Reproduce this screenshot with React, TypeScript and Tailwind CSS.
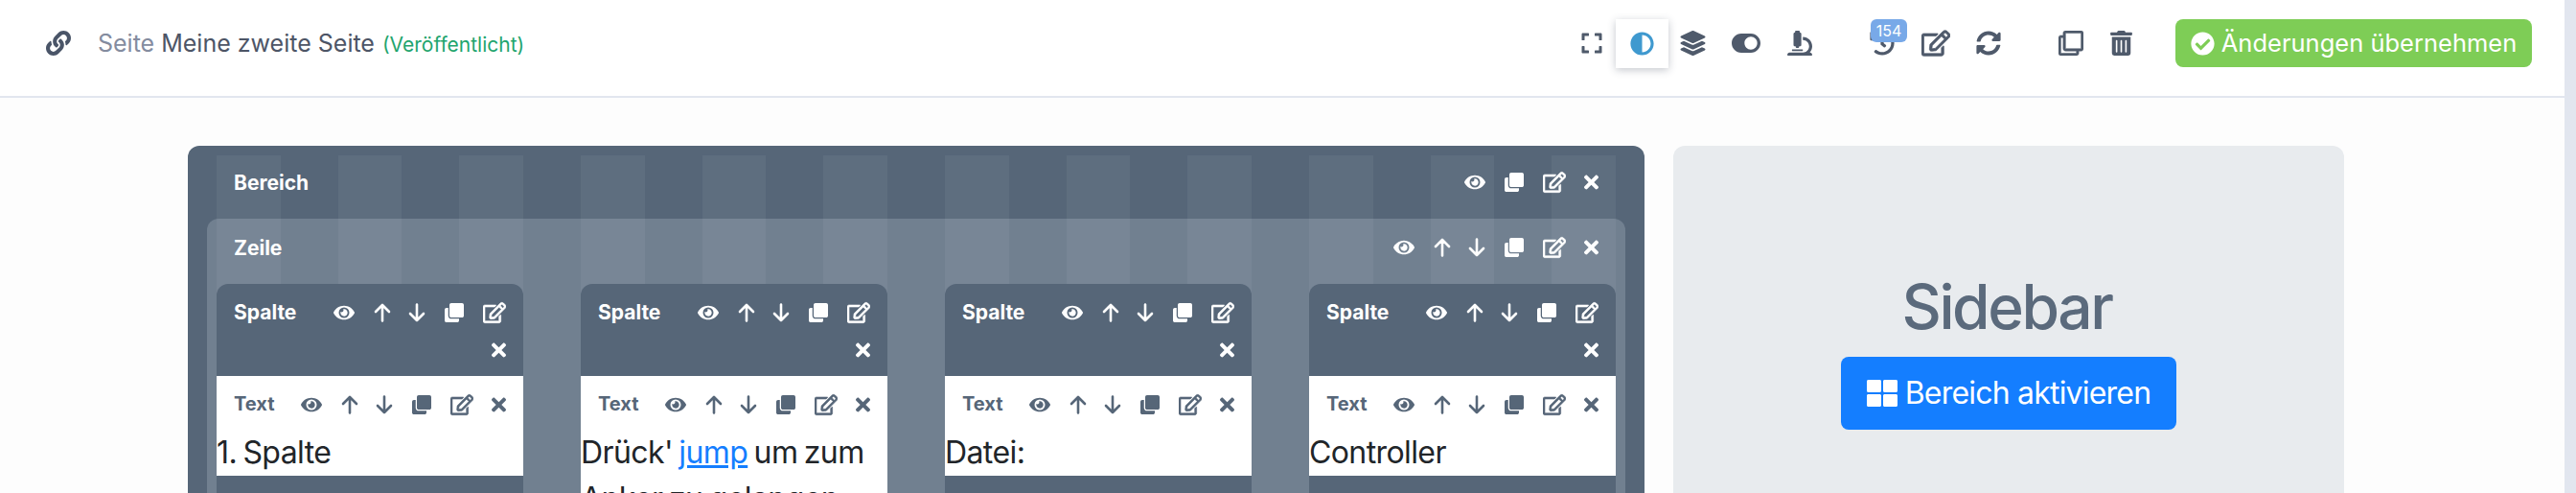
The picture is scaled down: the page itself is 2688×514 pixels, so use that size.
import {
  FaAdjust,
  FaCheckCircle,
  FaClone,
  FaEye,
  FaExpand,
  FaHistory,
  FaLayerGroup,
  FaLink,
  FaMicroscope,
  FaRegClone,
  FaRegEdit,
  FaSyncAlt,
  FaThLarge,
  FaTimes,
  FaToggleOn,
  FaTrashAlt,
} from "react-icons/fa";

function ArrowUp() {
  return (
    <svg viewBox="0 0 18 20" className="h-5 w-[18px] ml-5" fill="none" stroke="currentColor" strokeWidth="2.6" strokeLinecap="round" strokeLinejoin="round">
      <path d="M9 18.5V2M2 9l7-7 7 7" />
    </svg>
  );
}

function ArrowDown() {
  return (
    <svg viewBox="0 0 18 20" className="h-5 w-[18px] ml-[18px]" fill="none" stroke="currentColor" strokeWidth="2.6" strokeLinecap="round" strokeLinejoin="round">
      <path d="M9 1.5V18M2 11l7 7 7-7" />
    </svg>
  );
}

// Controls of one block head. `move` adds the up and down arrows.
function BlockTools({ move }: { move?: boolean }) {
  return (
    <>
      <FaEye className="h-[22px] w-[22px] ml-[19px]" />
      {move && <ArrowUp />}
      {move && <ArrowDown />}
      <FaClone className="h-5 w-5 ml-5" />
      <FaRegEdit className="h-6 w-6 ml-5 stroke-[14]" />
      <FaTimes className="h-[22px] w-[15px] ml-[19px]" />
    </>
  );
}

function Column({ children }: { children: React.ReactNode }) {
  return (
    <div className="relative z-10 w-[320px] bg-[#566678] rounded-t-xl overflow-hidden">
      <div className="h-24 pt-2.5 px-[18px] flex flex-wrap justify-end content-start items-center gap-y-[9px] text-white">
        <span className="text-[21px] leading-[39px] font-bold mr-auto">Spalte</span>
        <BlockTools move />
      </div>
      <div className="bg-white">
        <div className="h-14 pt-2.5 px-[18px] flex items-start text-[#566678]">
          <span className="text-[20px] leading-[39px] font-bold mr-auto">Text</span>
          <div className="h-[39px] flex items-center">
            <BlockTools move />
          </div>
        </div>
        <p className="text-[32px] leading-[48px] tracking-[-0.6px] [word-spacing:-2px] text-[#212529]">{children}</p>
      </div>
      <div className="h-6" />
    </div>
  );
}

export default function App() {
  const stripes = Array.from({ length: 12 }, (_, i) => i);

  return (
    <div className="h-[514px] overflow-hidden flex bg-[#fdfdfd] font-['Inter','Liberation_Sans',sans-serif]">
      <div className="flex-1 min-w-0">
        <header className="h-[102px] bg-white border-b-2 border-[#e2e6ef] flex items-center pl-12 pr-[34px] pb-2.5 text-[#4d5566]">
          <FaLink className="h-[26px] w-[26px] text-[#4a5568]" />
          <h1 className="ml-7 mt-0.5 text-[25px] flex items-baseline">
            <span className="text-[#848c9f]">Seite</span>
            <span className="ml-[7px]">Meine zweite Seite</span>
            <span className="ml-2 text-[21px] text-[#1fa56e]">(Veröffentlicht)</span>
          </h1>
          <div className="ml-auto flex items-center text-[#4f5a6b]">
            <FaExpand className="h-6 w-6" />
            <div className="ml-[13px] h-[51px] w-[55px] flex items-center justify-center shadow-[0_2px_8px_rgba(60,70,90,0.3)]">
              <FaAdjust className="h-[25px] w-[25px] text-[#3f99cf]" />
            </div>
            <FaLayerGroup className="ml-3 h-[26px] w-[27px]" />
            <FaToggleOn className="ml-[27px] h-[30px] w-[30px]" />
            <FaMicroscope className="ml-[28px] h-[26px] w-[26px]" />
            <div className="relative ml-[60px] h-[26px] w-[26px]">
              <FaHistory className="h-[26px] w-[26px]" />
              <span className="absolute -top-3 left-px h-6 w-[38px] rounded-md bg-[#78a9e8] text-white text-[16px] leading-6 text-center">154</span>
            </div>
            <FaRegEdit className="ml-[28px] h-[30px] w-[30px] stroke-[14]" />
            <FaSyncAlt className="ml-[27px] h-[26px] w-[26px]" />
            <FaRegClone className="ml-[60px] h-[26px] w-[26px] stroke-[10]" />
            <FaTrashAlt className="ml-[28px] h-[26px] w-[23px]" />
            <button className="ml-[45px] h-[50px] w-[372px] rounded-lg bg-[#7ecd56] text-white text-[25.5px] flex items-center justify-center gap-[7px]">
              <FaCheckCircle className="h-[25px] w-[25px]" />
              Änderungen übernehmen
            </button>
          </div>
        </header>

        <main className="pt-[50px] pl-[196px] flex gap-[30px]">
          <section className="relative w-[1520px] h-[420px] bg-[#566678] rounded-xl px-5">
            <div className="absolute inset-x-[30px] top-2.5 bottom-0 grid grid-cols-12 gap-x-[60px] pointer-events-none z-[5]">
              {stripes.map((i) => (
                <div key={i} className="bg-white/5" />
              ))}
            </div>
            <div className="h-[76px] pt-[18px] px-7 flex items-start text-white">
              <span className="text-[21px] leading-[41px] font-bold mr-auto">Bereich</span>
              <div className="h-[39px] flex items-center">
                <BlockTools />
              </div>
            </div>
            <div className="h-[344px] bg-[#718090] rounded-t-xl">
              <div className="h-[68px] pt-2.5 px-7 flex items-start text-white">
                <span className="text-[21px] leading-[41px] font-bold mr-auto">Zeile</span>
                <div className="h-[39px] flex items-center">
                  <BlockTools move />
                </div>
              </div>
              <div className="px-2.5 flex justify-between">
                <Column>1. Spalte</Column>
                <Column>
                  Drück' <a className="text-[#147eff] underline">jump</a> um zum Anker zu gelangen
                </Column>
                <Column>Datei:</Column>
                <Column>Controller</Column>
              </div>
            </div>
          </section>

          <aside className="w-[700px] h-[420px] bg-[#e8ebee] rounded-xl pt-[132px] flex flex-col items-center">
            <h2 className="text-[64px] leading-[72px] font-medium tracking-[-2.4px] text-[#5b6a7c] -ml-1">Sidebar</h2>
            <button className="mt-4 w-[350px] h-[76px] rounded-lg bg-[#147eff] text-white text-[32px] tracking-[-0.8px] flex items-center justify-center gap-2">
              <FaThLarge className="h-8 w-8" />
              Bereich aktivieren
            </button>
          </aside>
        </main>
      </div>
      <div className="w-3 shrink-0 bg-[#e2e6ef]" />
    </div>
  );
}
